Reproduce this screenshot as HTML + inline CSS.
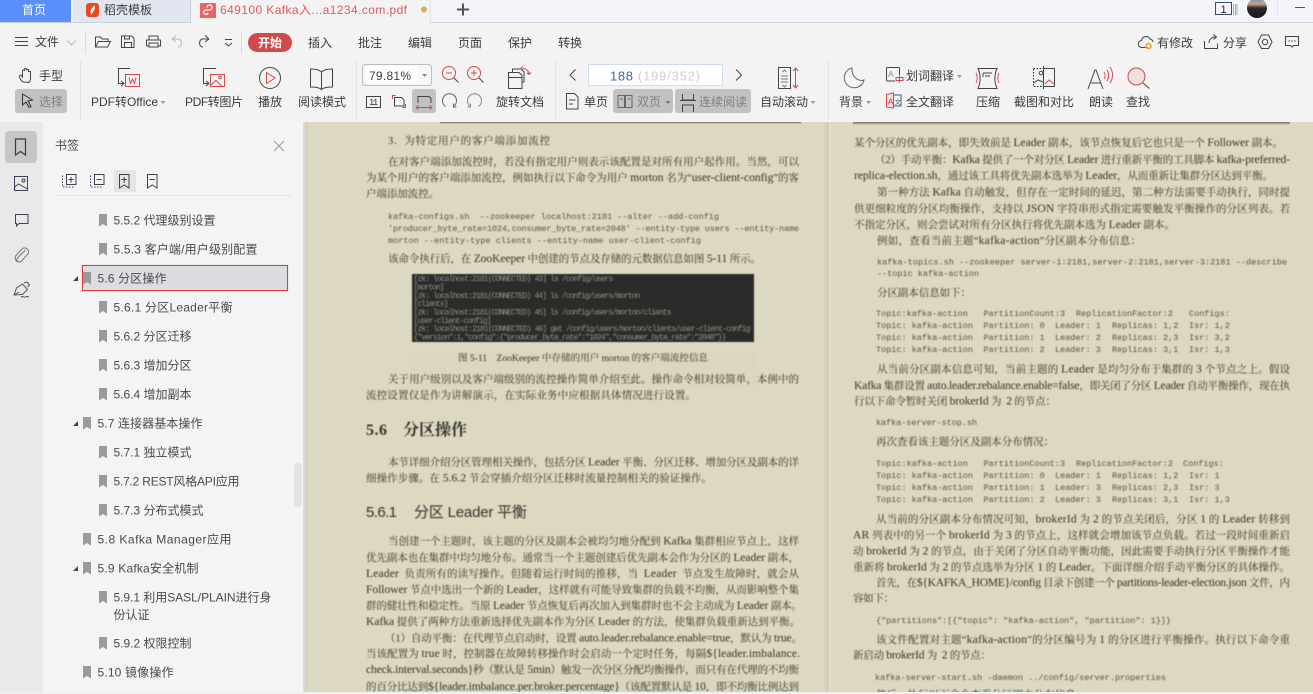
<!DOCTYPE html>
<html lang="zh-CN"><head><meta charset="utf-8"><title>649100 Kafka</title>
<style>
html,body{margin:0;padding:0;background:#f3f3f3;overflow:hidden;width:1313px;height:694px}
svg{display:block;position:absolute;left:0;top:0}
.u{font:12px "Liberation Sans","Noto Sans CJK SC",sans-serif;fill:#3c3c3c}
.g{fill:#808080}
.t{font:12px "Liberation Sans","Noto Sans CJK SC",sans-serif;fill:#4a4a4a}
.s{font:10.5px "Liberation Serif","Noto Serif CJK SC",serif;fill:#35332c;white-space:pre}
.a{font-size:11.6px}
.m{font:8.5px "Liberation Mono",monospace;fill:#55534b;white-space:pre}
.z{font:8.2px "Liberation Mono",monospace;fill:#8e8e86;white-space:pre}
.i{fill:none;stroke:#444;stroke-width:1}
.r{fill:none;stroke:#d4494c;stroke-width:1}
.l{fill:none;stroke:#b5b5b5;stroke-width:1}
.b{fill:#9a9a9a}
</style></head><body>
<svg width="1313" height="694" viewBox="0 0 1313 694" xmlns="http://www.w3.org/2000/svg">
<defs>
<linearGradient id="av" x1="0" y1="0" x2="0" y2="1"><stop offset="0" stop-color="#6f8fa8"/><stop offset=".3" stop-color="#c8a58a"/><stop offset=".5" stop-color="#2a2a2c"/><stop offset="1" stop-color="#151517"/></linearGradient>
<path id="bm" d="M0 0h8v12.500l-4-2.500-4 2.500z"/>
<linearGradient id="dk" x1="0" y1="0" x2="0" y2="1"><stop offset="0" stop-color="#55534a" stop-opacity=".8"/><stop offset="1" stop-color="#55534a" stop-opacity="0"/></linearGradient>
</defs>

<!-- base -->
<rect width="1313" height="694" fill="#f3f3f3"/>

<!-- pages -->
<rect x="303" y="122" width="3" height="570" fill="#eef0f3"/>
<rect x="304" y="122" width="2" height="570" fill="#cfd6e0"/>
<rect x="306" y="122" width="1007" height="570" fill="#ddd8c1"/>
<rect x="306" y="122" width="2" height="570" fill="#d9d2b2"/>
<rect x="823" y="122" width="3" height="570" fill="#d9d4bc"/>
<rect x="826" y="122" width="3" height="570" fill="#d2cdb9"/>
<rect x="829" y="122" width="2" height="570" fill="#e3decb"/>
<rect x="440" y="122" width="361" height="2" fill="url(#dk)"/>
<rect x="853" y="122" width="437" height="3" fill="url(#dk)"/>
<rect x="410" y="351" width="347" height="37" fill="#000" opacity=".008"/>
<rect x="405" y="660" width="350" height="32" fill="#000" opacity=".012"/>

<g style="filter:blur(.4px)">
<!-- left page -->
<text class="s" x="388" y="144" textLength="162">3.  为特定用户的客户端添加流控</text>
<text class="s" x="388" y="165" textLength="411">在对客户端添加流控时，若没有指定用户则表示该配置是对所有用户起作用。当然，可以</text>
<text class="s" x="366" y="181" textLength="433">为某个用户的客户端添加流控，例如执行以下命令为用户 <tspan class="a">morton</tspan> 名为“<tspan class="a">user-client-config</tspan>”的客</text>
<text class="s" x="366" y="197" textLength="73">户端添加流控。</text>
<text class="m" x="388" y="219" textLength="331">kafka-configs.sh  --zookeeper localhost:2181 --alter --add-config</text>
<text class="m" x="388" y="231" textLength="411">'producer_byte_rate=1024,consumer_byte_rate=2048' --entity-type users --entity-name</text>
<text class="m" x="388" y="243" textLength="313">morton --entity-type clients --entity-name user-client-config</text>
<text class="s" x="388" y="262" textLength="373">该命令执行后，在 <tspan class="a">ZooKeeper</tspan> 中创建的节点及存储的元数据信息如图 <tspan class="a">5-11</tspan> 所示。</text>
<rect x="412" y="274" width="342" height="68" fill="#2b2b29"/>
<text class="z" x="413.500" y="281" textLength="200">[zk: localhost:2181(CONNECTED) 43] ls /config/users</text>
<text class="z" x="413.500" y="289.500" textLength="31">[morton]</text>
<text class="z" x="413.500" y="298" textLength="227">[zk: localhost:2181(CONNECTED) 44] ls /config/users/morton</text>
<text class="z" x="413.500" y="306" textLength="35">[clients]</text>
<text class="z" x="413.500" y="314.500" textLength="258">[zk: localhost:2181(CONNECTED) 45] ls /config/users/morton/clients</text>
<text class="z" x="413.500" y="323" textLength="78">[user-client-config]</text>
<text class="z" x="413.500" y="331" textLength="337">[zk: localhost:2181(CONNECTED) 46] get /config/users/morton/clients/user-client-config</text>
<text class="z" x="413.500" y="339.500" textLength="313">{"version":1,"config":{"producer_byte_rate":"1024","consumer_byte_rate":"2048"}}</text>
<text class="s" x="458" y="361" textLength="250" style="font-size:9.600px">图 5-11    ZooKeeper 中存储的用户 morton 的客户端流控信息</text>
<text class="s" x="388" y="382.500" textLength="411">关于用户级别以及客户端级别的流控操作简单介绍至此。操作命令相对较简单，本例中的</text>
<text class="s" x="366" y="398.500" textLength="330">流控设置仅是作为讲解演示，在实际业务中应根据具体情况进行设置。</text>
<text class="s" x="366" y="435" style="font-size:16px;font-weight:700" textLength="21">5.6</text>
<text class="s" x="403" y="435" style="font-size:16px;font-weight:700" textLength="64">分区操作</text>
<text class="s" x="388" y="465.500" textLength="411">本节详细介绍分区管理相关操作，包括分区 <tspan class="a">Leader</tspan> 平衡、分区迁移、增加分区及副本的详</text>
<text class="s" x="366" y="481.500" textLength="346">细操作步骤。在 <tspan class="a">5.6.2</tspan> 节会穿插介绍分区迁移时流量控制相关的验证操作。</text>
<text class="t" x="366" y="517" style="font-size:15px;fill:#33322c" textLength="31">5.6.1</text>
<text class="t" x="414" y="517" style="font-size:15px;fill:#33322c" textLength="113">分区 Leader 平衡</text>
<text class="s" x="388" y="544.500" textLength="411">当创建一个主题时，该主题的分区及副本会被均匀地分配到 <tspan class="a">Kafka</tspan> 集群相应节点上，这样</text>
<text class="s" x="366" y="561" textLength="433">优先副本也在集群中均匀地分布。通常当一个主题创建后优先副本会作为分区的 <tspan class="a">Leader</tspan> 副本，</text>
<text class="s" x="366" y="577" textLength="433"><tspan class="a">Leader</tspan>  负责所有的读写操作。但随着运行时间的推移，当  <tspan class="a">Leader</tspan>  节点发生故障时，就会从</text>
<text class="s" x="366" y="593" textLength="433"><tspan class="a">Follower</tspan> 节点中选出一个新的 <tspan class="a">Leader</tspan>，这样就有可能导致集群的负载不均衡，从而影响整个集</text>
<text class="s" x="366" y="609" textLength="436">群的健壮性和稳定性。当原 <tspan class="a">Leader</tspan> 节点恢复后再次加入到集群时也不会主动成为 <tspan class="a">Leader</tspan> 副本。</text>
<text class="s" x="366" y="625" textLength="434"><tspan class="a">Kafka</tspan> 提供了两种方法重新选择优先副本作为分区 <tspan class="a">Leader</tspan> 的方法，使集群负载重新达到平衡。</text>
<text class="s" x="385" y="641.500" textLength="417">（1）自动平衡：在代理节点启动时，设置 <tspan class="a">auto.leader.rebalance.enable=true</tspan>，默认为 <tspan class="a">true</tspan>。</text>
<text class="s" x="366" y="657" textLength="434">当该配置为 <tspan class="a">true</tspan> 时，控制器在故障转移操作时会启动一个定时任务，每隔<tspan class="a">${leader.imbalance.</tspan></text>
<text class="s" x="366" y="673" textLength="433"><tspan class="a">check.interval.seconds}</tspan>秒（默认是 <tspan class="a">5min</tspan>）触发一次分区分配均衡操作，而只有在代理的不均衡</text>
<text class="s" x="366" y="690" textLength="433">的百分比达到<tspan class="a">${leader.imbalance.per.broker.percentage}</tspan>（该配置默认是 <tspan class="a">10</tspan>，即不均衡比例达到</text>

<!-- right page -->
<text class="s" x="854" y="146" textLength="429">某个分区的优先副本，即失效前是 <tspan class="a">Leader</tspan> 副本，该节点恢复后它也只是一个 <tspan class="a">Follower</tspan> 副本。</text>
<text class="s" x="875" y="163" textLength="415">（2）手动平衡：<tspan class="a">Kafka</tspan> 提供了一个对分区 <tspan class="a">Leader</tspan> 进行重新平衡的工具脚本 <tspan class="a">kafka-preferred-</tspan></text>
<text class="s" x="854" y="179" textLength="419"><tspan class="a">replica-election.sh</tspan>，通过该工具将优先副本选举为 <tspan class="a">Leader</tspan>，从而重新让集群分区达到平衡。</text>
<text class="s" x="877" y="195.500" textLength="413">第一种方法 <tspan class="a">Kafka</tspan> 自动触发，但存在一定时间的延迟，第二种方法需要手动执行，同时提</text>
<text class="s" x="854" y="212" textLength="436">供更细粒度的分区均衡操作，支持以 <tspan class="a">JSON</tspan> 字符串形式指定需要触发平衡操作的分区列表。若</text>
<text class="s" x="854" y="228" textLength="321">不指定分区，则会尝试对所有分区执行将优先副本选为 <tspan class="a">Leader</tspan> 副本。</text>
<text class="s" x="877" y="244" textLength="264">例如，查看当前主题“<tspan class="a">kafka-action</tspan>”分区副本分布信息：</text>
<text class="m" x="877" y="264.500" textLength="410">kafka-topics.sh --zookeeper server-1:2181,server-2:2181,server-3:2181 --describe</text>
<text class="m" x="877" y="276" textLength="102">--topic kafka-action</text>
<text class="s" x="877" y="296" textLength="94">分区副本信息如下：</text>
<text class="m" y="316"><tspan x="876">Topic:kafka-action</tspan><tspan x="983.500">PartitionCount:3</tspan><tspan x="1076">ReplicationFactor:2</tspan><tspan x="1189">Configs:</tspan></text>
<text class="m" y="328"><tspan x="876">Topic: kafka-action</tspan><tspan x="983.500">Partition: 0</tspan><tspan x="1055">Leader: 1</tspan><tspan x="1112">Replicas: 1,2</tspan><tspan x="1189">Isr: 1,2</tspan></text>
<text class="m" y="340"><tspan x="876">Topic: kafka-action</tspan><tspan x="983.500">Partition: 1</tspan><tspan x="1055">Leader: 2</tspan><tspan x="1112">Replicas: 2,3</tspan><tspan x="1189">Isr: 3,2</tspan></text>
<text class="m" y="352"><tspan x="876">Topic: kafka-action</tspan><tspan x="983.500">Partition: 2</tspan><tspan x="1055">Leader: 3</tspan><tspan x="1112">Replicas: 3,1</tspan><tspan x="1189">Isr: 1,3</tspan></text>
<text class="s" x="877" y="372.500" textLength="413">从当前分区副本信息可知，当前主题的 <tspan class="a">Leader</tspan> 是均匀分布于集群的 <tspan class="a">3</tspan> 个节点之上。假设</text>
<text class="s" x="854" y="389" textLength="436"><tspan class="a">Kafka</tspan> 集群设置 <tspan class="a">auto.leader.rebalance.enable=false</tspan>，即关闭了分区 <tspan class="a">Leader</tspan> 自动平衡操作，现在执</text>
<text class="s" x="854" y="404.500" textLength="202">行以下命令暂时关闭 <tspan class="a">brokerId</tspan> 为  <tspan class="a">2</tspan> 的节点：</text>
<text class="m" x="876" y="425" textLength="101">kafka-server-stop.sh</text>
<text class="s" x="876" y="445" textLength="178">再次查看该主题分区及副本分布情况：</text>
<text class="m" y="466"><tspan x="876">Topic:kafka-action</tspan><tspan x="983.500">PartitionCount:3</tspan><tspan x="1076">ReplicationFactor:2</tspan><tspan x="1183">Configs:</tspan></text>
<text class="m" y="478"><tspan x="876">Topic: kafka-action</tspan><tspan x="983.500">Partition: 0</tspan><tspan x="1055">Leader: 1</tspan><tspan x="1112">Replicas: 1,2</tspan><tspan x="1189">Isr: 1</tspan></text>
<text class="m" y="490"><tspan x="876">Topic: kafka-action</tspan><tspan x="983.500">Partition: 1</tspan><tspan x="1055">Leader: 3</tspan><tspan x="1112">Replicas: 2,3</tspan><tspan x="1189">Isr: 3</tspan></text>
<text class="m" y="502"><tspan x="876">Topic: kafka-action</tspan><tspan x="983.500">Partition: 2</tspan><tspan x="1055">Leader: 3</tspan><tspan x="1112">Replicas: 3,1</tspan><tspan x="1189">Isr: 1,3</tspan></text>
<text class="s" x="876" y="522.500" textLength="414">从当前的分区副本分布情况可知，<tspan class="a">brokerId</tspan> 为 <tspan class="a">2</tspan> 的节点关闭后，分区 <tspan class="a">1</tspan> 的 <tspan class="a">Leader</tspan> 转移到</text>
<text class="s" x="853" y="538.500" textLength="437"><tspan class="a">AR</tspan> 列表中的另一个 <tspan class="a">brokerId</tspan> 为 <tspan class="a">3</tspan> 的节点上，这样就会增加该节点负载。若过一段时间重新启</text>
<text class="s" x="853" y="554.500" textLength="437">动 <tspan class="a">brokerId</tspan> 为 <tspan class="a">2</tspan> 的节点，由于关闭了分区自动平衡功能，因此需要手动执行分区平衡操作才能</text>
<text class="s" x="853" y="570.500" textLength="437">重新将 <tspan class="a">brokerId</tspan> 为 <tspan class="a">2</tspan> 的节点选举为分区 <tspan class="a">1</tspan> 的 <tspan class="a">Leader</tspan>。下面详细介绍手动平衡分区的具体操作。</text>
<text class="s" x="876" y="586" textLength="414">首先，在<tspan class="a">${KAFKA_HOME}/config</tspan> 目录下创建一个 <tspan class="a">partitions-leader-election.json</tspan> 文件，内</text>
<text class="s" x="853" y="601.500" textLength="41">容如下：</text>
<text class="m" x="876" y="623" textLength="295">{"partitions":[{"topic": "kafka-action", "partition": 1}]}</text>
<text class="s" x="876" y="643" textLength="414">该文件配置对主题“<tspan class="a">kafka-action</tspan>”的分区编号为 <tspan class="a">1</tspan> 的分区进行平衡操作。执行以下命令重</text>
<text class="s" x="853" y="658.500" textLength="138">新启动 <tspan class="a">brokerId</tspan> 为  <tspan class="a">2</tspan> 的节点：</text>
<text class="m" x="875" y="680" textLength="291">kafka-server-start.sh -daemon ../config/server.properties</text>
<text class="s" x="876" y="698" textLength="210">然后，执行以下命令查看分区副本分布信息：</text>
</g>
<rect y="692" width="1313" height="2" fill="#efefef"/>

<!-- left rail + panel -->
<rect x="0" y="122" width="43" height="570" fill="#e9e9e9"/>
<rect x="43" y="122" width="260" height="570" fill="#f4f4f4"/>
<rect x="303" y="122" width="1" height="570" fill="#dcdcdc"/>
<rect x="5" y="131" width="32" height="32" rx="4" fill="#c6c6c6"/>
<path d="M15.500 139h10v16l-5-3.500-5 3.500z" fill="none" stroke="#2c3a52" stroke-width="1.200"/>
<g fill="none" stroke="#3a4458" stroke-width="1">
<rect x="14.500" y="176.500" width="13" height="14"/><circle cx="23.500" cy="180.500" r="1.500"/><path d="M14.500 187l4-3 9 5"/>
<path d="M15.500 214.500h12.500v9h-9l-2.500 2.500v-2.500h-1z"/>
<path d="M25.500 250l-8 8a2.500 2.500 0 0 0 3.500 3.500l7-7.500a4 4 0 0 0-5.500-5.500l-7 7.500a5.500 5.500 0 0 0 2 6" stroke="#777"/>
<path d="M14 295l2.500-7 6-4 5 5.500-5 5zM14 295l5-3M24 283l3-1 2.500 3-2 2M21 297c2-1.500 3 1 4.500 0s2.500-.5 3.500 0" stroke="#555"/>
</g>
<text class="t" x="55" y="149.500" textLength="24">书签</text>
<path d="M274 141l10 10M284 141l-10 10" fill="none" stroke="#9a9a9a" stroke-width="1"/>
<rect x="114" y="170" width="22" height="22" rx="2" fill="#e4e4e4"/>
<g fill="none" stroke="#3b4252" stroke-width="1">
<path d="M66.500 174.500h9.500v10h-9.500z"/><path d="M71 177v5.500M68.500 179.500h5"/><path d="M62.500 175.500v11.500h11" stroke-dasharray="1.500 1.500"/>
<path d="M94.500 174.500h9.500v10h-9.500z"/><path d="M96.500 179.500h5"/><path d="M90.500 175.500v11.500h11" stroke-dasharray="1.500 1.500"/>
<path d="M119.500 174.500h9.500v13.500l-4.750-3-4.750 3z"/><path d="M124.250 177v6M121.500 179.500h5.500"/>
<path d="M147.500 174.500h9.500v13.500l-4.750-3-4.750 3z"/><path d="M149.500 179.500h5.500"/>
</g>
<rect x="55" y="195" width="236" height="1" fill="#e2e2e2"/>

<!-- bookmark rows -->
<rect x="81" y="264" width="208" height="28" fill="#e8e8ea"/>
<rect x="82.500" y="265.500" width="205" height="25" fill="#dcdde0" stroke="#e53a3a" stroke-width="1"/>
<g class="b">
<use href="#bm" x="99" y="214"/><use href="#bm" x="99" y="243"/><use href="#bm" x="83" y="272"/><use href="#bm" x="99" y="301"/><use href="#bm" x="99" y="330"/><use href="#bm" x="99" y="359"/><use href="#bm" x="99" y="388"/><use href="#bm" x="83" y="417"/><use href="#bm" x="99" y="446"/><use href="#bm" x="99" y="475"/><use href="#bm" x="99" y="504"/><use href="#bm" x="83" y="533"/><use href="#bm" x="83" y="562"/><use href="#bm" x="99" y="591"/><use href="#bm" x="99" y="637"/><use href="#bm" x="83" y="666"/>
</g>
<path d="M73 281l5-5v5zM73 426l5-5v5zM73 571l5-5v5z" fill="#444"/>
<text class="t" x="113.500" y="224.500" textLength="102">5.5.2 代理级别设置</text>
<text class="t" x="113.500" y="253.500" textLength="144">5.5.3 客户端/用户级别配置</text>
<text class="t" x="97.500" y="282.500" textLength="69">5.6 分区操作</text>
<text class="t" x="113.500" y="311.500" textLength="119">5.6.1 分区Leader平衡</text>
<text class="t" x="113.500" y="340.500" textLength="78">5.6.2 分区迁移</text>
<text class="t" x="113.500" y="369.500" textLength="78">5.6.3 增加分区</text>
<text class="t" x="113.500" y="398.500" textLength="78">5.6.4 增加副本</text>
<text class="t" x="97.500" y="427.500" textLength="105">5.7 连接器基本操作</text>
<text class="t" x="113.500" y="456.500" textLength="78">5.7.1 独立模式</text>
<text class="t" x="113.500" y="485.500" textLength="126">5.7.2 REST风格API应用</text>
<text class="t" x="113.500" y="514.500" textLength="90">5.7.3 分布式模式</text>
<text class="t" x="97.500" y="543.500" textLength="134">5.8 Kafka Manager应用</text>
<text class="t" x="97.500" y="572.500" textLength="101">5.9 Kafka安全机制</text>
<text class="t" x="113.500" y="601.500" textLength="158">5.9.1 利用SASL/PLAIN进行身</text>
<text class="t" x="113.500" y="619" textLength="36">份认证</text>
<text class="t" x="113.500" y="647.500" textLength="78">5.9.2 权限控制</text>
<text class="t" x="97.500" y="676.500" textLength="76">5.10 镜像操作</text>
<rect x="294" y="463" width="8" height="44" rx="3.500" fill="#e3e3e3"/>

<!-- tab bar -->
<rect width="1313" height="22" fill="#f3f5fa"/>
<rect y="22" width="1313" height="1" fill="#c9d0e0"/>
<rect width="71" height="22" fill="#5b8ffb"/>
<text class="u" x="22" y="14" textLength="24" style="fill:#fff;font-size:12px">首页</text>
<rect x="73" width="117" height="22" fill="#e2e6f0"/>
<rect x="86" y="3" width="13" height="14" rx="3" fill="#ea4a1f"/>
<path d="M94 5c-.5 3-4 4-3.500 7 .2 1.500 1.500 2.500 1.500 2.500 0-2.500 2.500-3.500 3-7z" fill="#fff"/>
<text class="u" x="104" y="14" textLength="48">稻壳模板</text>
<rect x="190" y="0" width="1" height="23" fill="#c9d0e0"/>
<rect x="191" y="0" width="239" height="23" fill="#f3f3f3"/>
<rect x="430" y="0" width="1" height="22" fill="#dfe3ec"/>
<rect x="200" y="3" width="16" height="15" rx="1" fill="#e96565"/>
<path d="M207 7.500a2.500 2.500 0 1 1 2.500 2.500h-3.500a2.200 2.200 0 1 0 2 3" fill="none" stroke="#fff" stroke-width="1.200"/>
<text class="u" x="220" y="14" textLength="187" style="fill:#e05a5a">649100 Kafka入...a1234.com.pdf</text>
<circle cx="424" cy="9.500" r="3" fill="#e8a566"/>
<path d="M457 9.500h12M463 3.500v12" stroke="#555" stroke-width="2" fill="none"/>
<rect x="1215.500" y="2.500" width="16" height="12" fill="none" stroke="#3a4a6a"/>
<text class="u" x="1220.500" y="13" style="font-size:11px;fill:#222">1</text>
<path d="M1233.500 4v11M1235.500 4v11M1237 4v11" stroke="#7a8aa8" stroke-width=".7"/>
<circle cx="1257" cy="8" r="10" fill="url(#av)"/>
<rect x="1277" y="1" width="1" height="14" fill="#dcdfe6"/>
<rect x="1295" y="7" width="10" height="1" fill="#555"/>

<!-- menu row -->
<path d="M15 37.500h13M15 41.500h13M15 45.500h13" class="i"/>
<text class="u" x="35" y="46" textLength="24">文件</text>
<path d="M67 40.500l4.500 4.500 4.500-4.500" class="l"/>
<rect x="85" y="31" width="1" height="23" fill="#dcdcdc"/>
<g class="i">
<path d="M95.500 47v-10h5l2 2h5.500v2.500M95.500 47l3-5.500h12l-3 5.500z"/>
<path d="M121.500 36h10l2.500 2.500v9h-12.500zM124.500 47.500v-5h7v5M124.500 36v3h5v-3"/>
<path d="M149 40v-4h9v4M146.500 46h2.500v-3h9v3h2.500v-6h-14zM149 43v4h9v-4"/>
</g>
<path d="M172 39l4-3.500M172 39l4 3M172 39h7a4.500 4.500 0 0 1 0 8h-1" class="l"/>
<path d="M209 39l-4-3.500M209 39l-4 3M209 39h-7a4.500 4.500 0 0 0 0 8h1" class="i"/>
<path d="M225 39.500h7M225 43l3.500 3 3.500-3" class="i"/>
<rect x="241" y="31" width="1" height="23" fill="#dcdcdc"/>
<rect x="248" y="33" width="44" height="19" rx="9.500" fill="#d04a4d"/>
<text class="u" x="258" y="47" textLength="24" style="fill:#fff;font-weight:700">开始</text>
<text class="u" x="308" y="47" textLength="24">插入</text>
<text class="u" x="358" y="47" textLength="24">批注</text>
<text class="u" x="408" y="47" textLength="24">编辑</text>
<text class="u" x="458" y="47" textLength="24">页面</text>
<text class="u" x="508" y="47" textLength="24">保护</text>
<text class="u" x="558" y="47" textLength="24">转换</text>
<path d="M1148 47.500h-6a3.500 3.500 0 0 1-.5-7 4.500 4.500 0 0 1 8.500-1.500 4 4 0 0 1 3 3" class="i"/>
<circle cx="1148.500" cy="46" r="2.500" fill="none" stroke="#f0a020" stroke-width="1.600"/>
<text class="u" x="1157" y="47" textLength="36">有修改</text>
<path d="M1204.500 41v7.500h13v-5M1209 43c0-4 3-6 7-6M1213.500 34.500l3 2.500-3 2.500" class="i"/>
<text class="u" x="1223" y="47" textLength="24">分享</text>
<path d="M1261.500 35h7l3.500 7-3.500 6.500h-7l-3.500-6.500z" class="i"/><circle cx="1265" cy="42" r="2.700" class="i"/>
<path d="M1285.500 36.500h13v9h-5l-1.500 1.500-1.500-1.500h-5z" class="i"/><path d="M1288.500 41h1.500M1291 41h1.500M1294 41h1.500" class="i"/>

<!-- toolbar row -->
<path d="M23 82c-2-1-3.500-4-3.500-6 0-1 1.500-1 2-.5l1 1.500v-6c0-1.500 2-1.500 2 0v-1.500c0-1.500 2-1.500 2 0v1c0-1.500 2-1.500 2 0v1.500c0-1 2-1 2 0v6c0 2-.5 3.500-1.500 4.500z" class="i"/>
<text class="u" x="39" y="80" textLength="24">手型</text>
<rect x="15" y="89" width="52" height="24" rx="3" fill="#c2c2c2"/>
<path d="M22.500 94l10 6-4.500 1 3 5.500-2 1-3-5.500-3.500 3z" fill="none" stroke="#333"/>
<text class="u g" x="39" y="106" textLength="24">选择</text>
<rect x="80" y="61" width="1" height="59" fill="#e0e0e0"/>

<path d="M130 68.500h-11.500v15h2M118.500 83.500h5M121 81l3 2.500-3 2.500" class="i"/>
<rect x="125.500" y="74.500" width="14" height="12" class="r"/>
<path d="M129 77.500l1.500 6 2-4.500 2 4.500 1.500-6" class="r"/>
<text class="u" x="91" y="106" textLength="67">PDF转Office</text>
<path d="M160.500 101h5l-2.500 3z" fill="#999"/>

<path d="M216 68.500h-12.500v15h2M203.500 83.500h5M206 81l3 2.500-3 2.500" class="i"/>
<rect x="210.500" y="74.500" width="14" height="12" class="r"/>
<circle cx="220" cy="77.500" r="1.300" class="r"/><path d="M211 85l5-4.500 6 6" class="r"/>
<text class="u" x="185" y="106" textLength="58">PDF转图片</text>

<circle cx="270" cy="78" r="10.500" class="i"/>
<path d="M266.500 72.500l8.500 5.500-8.500 5.500z" class="r"/>
<text class="u" x="258" y="106" textLength="24">播放</text>

<path d="M321.500 72c-2-2-6-3-11-3v18c5 0 9 .5 11 2.500 2-2 6-2.500 11-2.500v-18c-5 0-9 1-11 3zM321.500 72v17" class="i"/>
<text class="u" x="298" y="106" textLength="48">阅读模式</text>
<rect x="356" y="61" width="1" height="59" fill="#e0e0e0"/>

<rect x="362.500" y="64.500" width="69" height="21" rx="3" fill="#f7f7f7" stroke="#bdbdbd"/>
<rect x="367" y="66" width="50" height="18" fill="#fff"/>
<text class="u" x="369" y="80" textLength="42">79.81%</text>
<path d="M422 74h5l-2.500 3z" fill="#888"/>
<rect x="366.500" y="96.500" width="14" height="11" class="i"/>
<text class="u" x="369.500" y="105" textLength="8.500" style="font-size:8px;fill:#222">1:1</text>
<path d="M392.500 99v-3.500h3M405.500 104v3.500h-3" class="r"/>
<path d="M394.500 97.500h7l2.500 2.500v6h-9.500z" class="i"/>
<rect x="412" y="89" width="24" height="24" rx="3" fill="#c2c2c2"/>
<path d="M418 103v-6.500h11l2 2v4.500" class="i"/>
<path d="M416 107.500h16M416 107.500l2.500-2M416 107.500l2.500 2M432 107.500l-2.500-2M432 107.500l-2.500 2" class="r"/>

<circle cx="449" cy="73" r="6.500" class="r"/><path d="M446 73h6" class="r"/><path d="M454 78l4.500 4.500" class="i"/>
<circle cx="474" cy="73" r="6.500" class="r"/><path d="M471 73h6M474 70v6" class="r"/><path d="M479 78l4.500 4.500" class="i"/>
<path d="M445.500 106.500a7 7 0 1 1 8 0M453.500 103.500v3.500h3" fill="none" stroke="#666"/>
<path d="M478.500 106.500a7 7 0 1 0-8 0M470.500 103.500v3.500h-3" fill="none" stroke="#888"/>
<path d="M508.500 72.500h10.500l3 3v13h-13.500zM512.500 72.500v-3.500h8.500l3 3v10h-2" class="i"/>
<path d="M523 68.500a6 6 0 0 1 6 6M523 66l-2 2.500 2.500 2M529 74.500l-2-2M529 74.500l2-2" class="r"/>
<path d="M508.500 77.500h13.500v11h-13.500z" fill="#f3f3f3" stroke="#444"/>
<text class="u" x="496" y="106" textLength="48">旋转文档</text>
<rect x="555" y="61" width="1" height="59" fill="#e0e0e0"/>

<path d="M575.500 69.500l-5.500 5.500 5.500 5.500" class="i"/>
<rect x="588.500" y="64.500" width="134" height="21" fill="#fff" stroke="#cfdcee"/>
<text class="u" x="610" y="80.500" textLength="23" style="font-size:13px;fill:#3b6ea8">188</text>
<text class="u" x="638" y="80.500" textLength="62" style="font-size:13px;fill:#cfcfcf">(199/352)</text>
<path d="M736 69.500l5.500 5.500-5.500 5.500" class="i"/>

<path d="M566.500 93.500h8l3.500 3.500v12h-11.500zM569 100h6.500M569 104h4" class="i"/>
<text class="u" x="584" y="106" textLength="24">单页</text>
<rect x="613" y="89" width="60" height="24" rx="3" fill="#c2c2c2"/>
<path d="M618 95.500h6.500v12h-6.500zM625.500 95.500h6.500v12h-6.500zM620 99h3M627.500 99h3" fill="none" stroke="#666"/>
<text class="u g" x="637" y="106" textLength="24">双页</text>
<path d="M665.500 101h5l-2.500 3z" fill="#777"/>
<rect x="675" y="89" width="76" height="24" rx="3" fill="#c2c2c2"/>
<path d="M682.500 94v6h11v-6M682.500 112v-7h11v7M680 100.500h16" class="i"/>
<text class="u g" x="699" y="106" textLength="48">连续阅读</text>
<rect x="778.500" y="67.500" width="12" height="21" class="i"/>
<path d="M781 76h7M781 79h7M781 82h7M782.500 72l2-2 2 2M782.500 85l2 2 2-2" fill="none" stroke="#777"/>
<path d="M795.500 68v20M793 71l2.500-3 2.500 3M793 85l2.500 3 2.500-3" class="r"/>
<text class="u" x="760" y="106" textLength="48">自动滚动</text>
<path d="M810.500 101h5l-2.500 3z" fill="#999"/>
<rect x="828" y="61" width="1" height="59" fill="#e0e0e0"/>

<path d="M852 68a10 10 0 1 0 12 12c-6 2-13-4-12-12z" fill="none" stroke="#666"/>
<text class="u" x="839" y="106" textLength="24">背景</text>
<path d="M866 101h5l-2.500 3z" fill="#999"/>

<rect x="886.500" y="67.500" width="13" height="13.500" rx="1" class="i"/>
<text class="u" x="888" y="77" style="font-size:8.500px;fill:#888">A</text>
<rect x="895" y="75" width="9" height="8" fill="#f3f3f3"/>
<path d="M896 77.500h7v3h-7zM899.500 75.500v7" class="r"/>
<text class="u" x="906" y="80" textLength="48">划词翻译</text>
<path d="M957 75h5l-2.500 3z" fill="#999"/>
<path d="M886.500 94.500l7-1.500v15l-7-1z" style="fill:#f7dede;stroke:#d4494c"/>
<path d="M893.500 95h7.500v11h-7.500" fill="none" stroke="#4a5a80"/>
<text class="u" x="888" y="104.500" style="font-size:8px;fill:#c43b3e">A</text>
<text class="u" x="894.500" y="104" style="font-size:6.500px;fill:#4a5a80">文</text>
<text class="u" x="906" y="106" textLength="48">全文翻译</text>

<path d="M978 68.500h19c-3 7-3 13 0 20h-19c3-7 3-13 0-20zM983 73h9M983 73v4M985 76h5" class="i"/>
<path d="M976 73c1.500 3 1.500 7 0 10M999 73c-1.500 3-1.500 7 0 10" class="r"/>
<text class="u" x="976" y="106" textLength="24">压缩</text>

<rect x="1033.500" y="68.500" width="10" height="18" fill="none" stroke="#222" stroke-dasharray="1.500 1.500"/>
<path d="M1043.500 68.500h11v18h-11zM1043.500 66v23" class="i"/>
<circle cx="1041" cy="73" r="1.800" class="i"/>
<path d="M1034 83l4-3 5 2" class="i"/><path d="M1045 84l4-4 5 4" class="r"/>
<text class="u" x="1014" y="106" textLength="60">截图和对比</text>

<path d="M1088 89l7-19h1l7 19M1091 83h9.500" class="i"/>
<path d="M1104 72a6 6 0 0 1 0 7M1107 70a10 10 0 0 1 0 11M1110 67a14 14 0 0 1 0 16" class="r"/>
<text class="u" x="1089" y="106" textLength="24">朗读</text>

<circle cx="1136.500" cy="76.500" r="8.500" fill="#efe0e0" stroke="#d4494c"/>
<path d="M1143 83l6.500 5.500" class="i"/>
<text class="u" x="1126" y="106" textLength="24">查找</text>
</svg>
</body></html>
